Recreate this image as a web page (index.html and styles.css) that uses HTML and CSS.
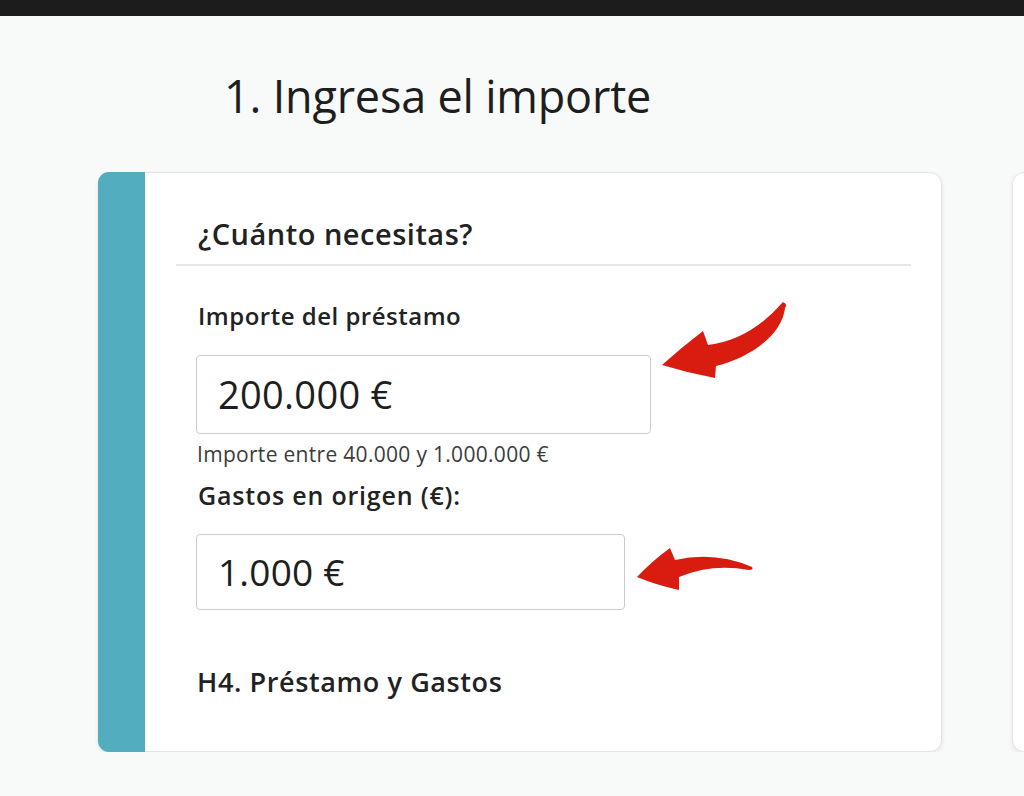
FILE: index.html
```html
<!DOCTYPE html>
<html lang="es">
<head>
<meta charset="utf-8">
<title>Ingresa el importe</title>
<link rel="stylesheet" href="styles.css">
</head>
<body>
<div class="topbar"></div>
<main class="page">
  <h1 class="title">1. Ingresa el importe</h1>
  <div class="cards">
    <section class="card">
      <div class="stripe"></div>
      <div class="card-body">
        <h2 class="card-head">¿Cuánto necesitas?</h2>
        <div class="fields">
          <label class="label">Importe del préstamo</label>
          <div class="input input-lg">200.000 €</div>
          <p class="help">Importe entre 40.000 y 1.000.000 €</p>
          <label class="label label-2">Gastos en origen (€):</label>
          <div class="input input-sm">1.000 €</div>
          <h4 class="h4">H4. Préstamo y Gastos</h4>
        </div>
      </div>
      <svg class="arrow arrow-1" viewBox="655 295 135 90" width="135" height="90" aria-hidden="true">
        <path d="M662,365 Q682,347 703,331 L708,345 Q750,340 783,302 Q788,304 785,308 C782,335 750,358 716,366 L715,378 Q688,373 662,365 Z" fill="#d81d10"/>
      </svg>
      <svg class="arrow arrow-2" viewBox="630 540 130 60" width="130" height="60" aria-hidden="true">
        <path d="M637,577 Q652,561 670,548 L675,560 Q715,551 752,567 Q754,570 749,570 Q712,563 679,577 L679,590 Q656,585 637,577 Z" fill="#d81d10"/>
      </svg>
    </section>
    <section class="card card-next"></section>
  </div>
</main>
</body>
</html>
```
FILE: styles.css
```css
* { box-sizing: border-box; }
html, body { margin: 0; padding: 0; }
body {
  background: #f8f9f9;
  font-family: "Open Sans", "Noto Sans", sans-serif;
  color: #222;
  width: 1024px;
  height: 796px;
  overflow: hidden;
}
.topbar {
  height: 16px;
  background: #1c1c1c;
}
.page {
  padding: 0;
}
.title {
  margin: 0;
  padding: 52px 0 0 224px;
  font-size: 45px;
  font-weight: 400;
  line-height: 56px;
  letter-spacing: -0.2px;
  color: #1e1e1e;
}
.cards {
  display: flex;
  gap: 70px;
  padding: 48px 0 0 98px;
  overflow: hidden;
}
.card {
  position: relative;
  flex: 0 0 844px;
  height: 580px;
  display: flex;
  background: #fff;
  border: 1px solid #e3e5e5;
  border-radius: 12px;
  box-shadow: 0 2px 5px rgba(0,0,0,0.08);
}
.card-next {
  flex: 0 0 300px;
  display: block;
}
.stripe {
  width: 47px;
  flex: 0 0 47px;
  background: #52adbe;
  border-radius: 11px 0 0 11px;
  margin: -1px 0 -1px -1px;
}
.card-body {
  flex: 1;
  padding: 0 30px 0 31px;
}
.card-head {
  margin: 0;
  padding: 43px 0 0 22px;
  height: 93px;
  font-size: 29px;
  font-weight: 600;
  line-height: 36px;
  letter-spacing: 0.5px;
  border-bottom: 2px solid #e6e7e7;
}
.fields {
  padding-left: 20px;
}
.label {
  display: block;
  margin: 35px 0 0 2px;
  font-size: 24px;
  font-weight: 600;
  line-height: 30px;
  letter-spacing: 0.5px;
}
.input {
  border: 1.5px solid #cacccc;
  border-radius: 4px;
  background: #fff;
  padding-left: 21px;
  color: #1e1e1e;
  font-weight: 400;
}
.input-lg {
  margin-top: 24px;
  width: 455px;
  height: 79px;
  font-size: 38px;
  line-height: 76px;
  letter-spacing: 0.3px;
}
.input-sm {
  margin-top: 24px;
  width: 429px;
  height: 76px;
  font-size: 37px;
  line-height: 73px;
  letter-spacing: 0.2px;
}
.help {
  margin: 7px 0 0 1px;
  font-size: 21px;
  line-height: 26px;
  color: #3b3b3b;
  letter-spacing: 0.3px;
}
.label-2 {
  margin-top: 13px;
  font-size: 25px;
  letter-spacing: 0.8px;
}
.h4 {
  margin: 55px 0 0 1px;
  font-size: 27px;
  font-weight: 600;
  line-height: 34px;
  letter-spacing: 0.6px;
}
.arrow {
  position: absolute;
  pointer-events: none;
}
.arrow-1 {
  left: 556px;
  top: 122px;
}
.arrow-2 {
  left: 531px;
  top: 367px;
}
```
